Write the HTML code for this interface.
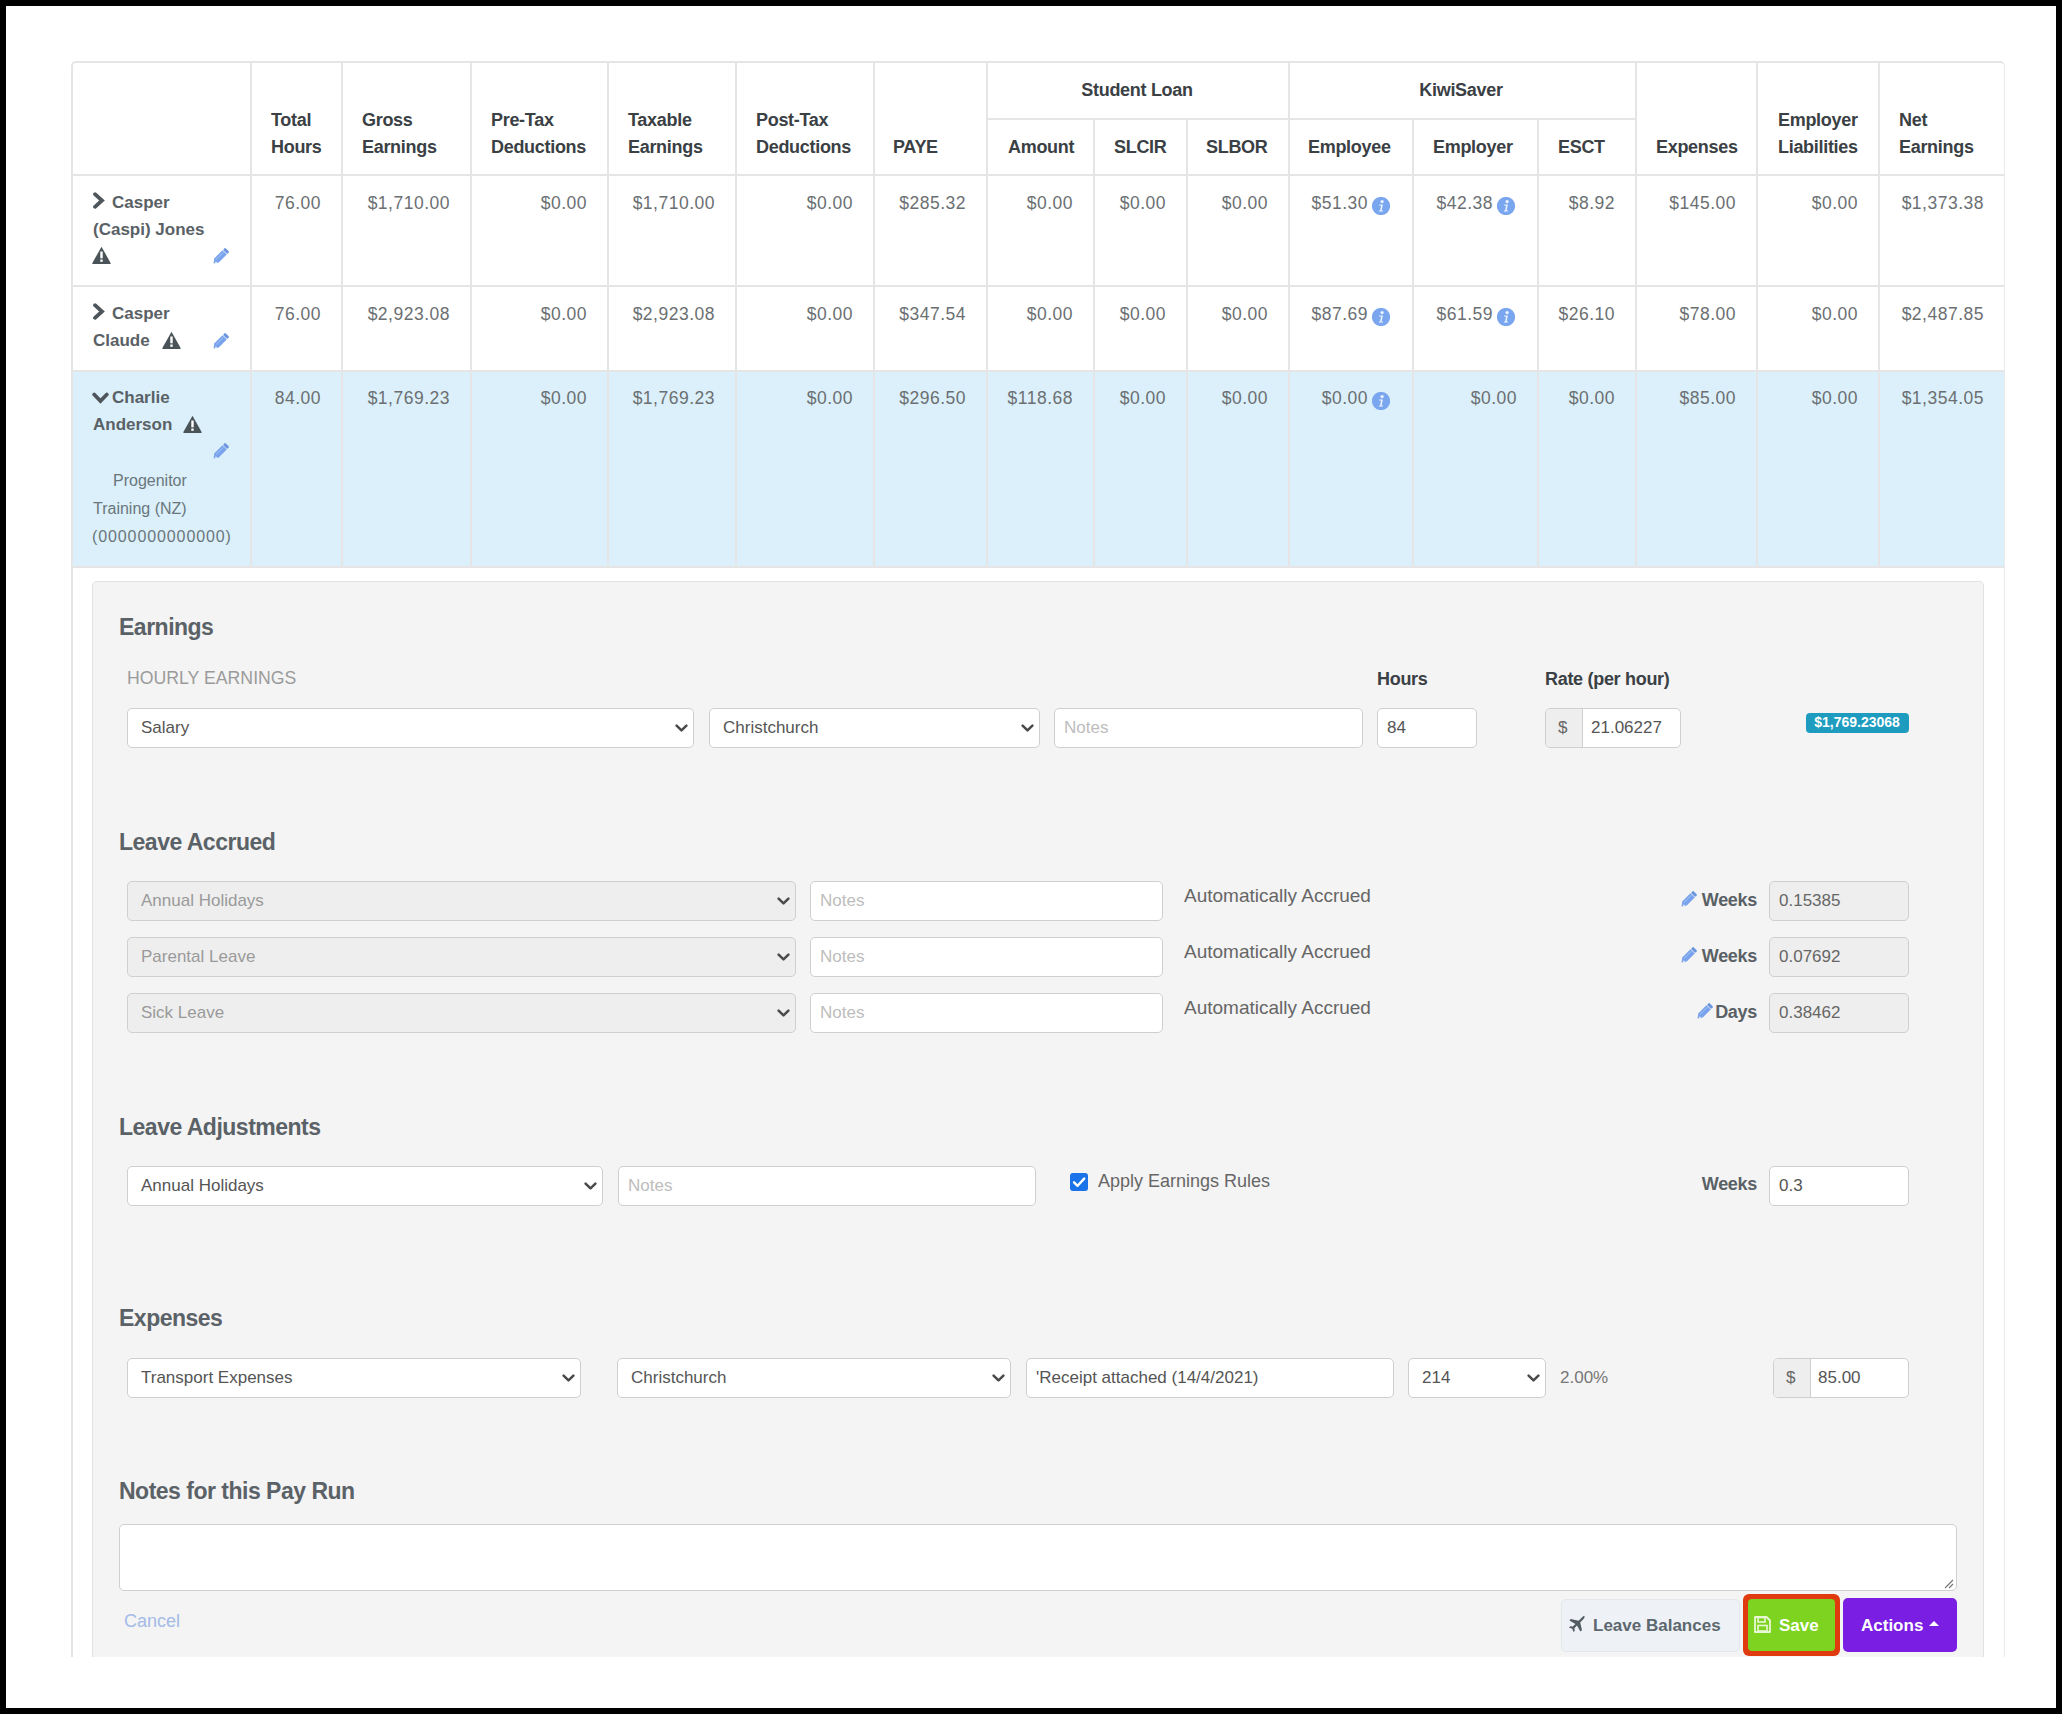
<!DOCTYPE html>
<html><head><meta charset="utf-8"><style>
html,body{margin:0;padding:0;}
body{width:2062px;height:1714px;background:#000;position:relative;overflow:hidden;font-family:'Liberation Sans', sans-serif;}
.t{position:absolute;white-space:nowrap;}
</style></head><body>

<div style="position:absolute;left:6px;top:6px;width:2050px;height:1702px;background:#fff;"></div>
<div style="position:absolute;left:72px;top:371px;width:1932px;height:196px;background:#dbf0fa;"></div>
<div style="position:absolute;left:71px;top:61px;width:1931px;height:1620px;border:2px solid #e5e5e5;border-right:1px solid #ebebeb;border-bottom:none;border-radius:5px 5px 0 0;"></div>
<div style="position:absolute;left:6px;top:1657px;width:2050px;height:51px;background:#fff;"></div>
<div style="position:absolute;left:250px;top:61px;width:2px;height:506px;background:#e5e5e5;"></div>
<div style="position:absolute;left:341px;top:61px;width:2px;height:506px;background:#e5e5e5;"></div>
<div style="position:absolute;left:470px;top:61px;width:2px;height:506px;background:#e5e5e5;"></div>
<div style="position:absolute;left:607px;top:61px;width:2px;height:506px;background:#e5e5e5;"></div>
<div style="position:absolute;left:735px;top:61px;width:2px;height:506px;background:#e5e5e5;"></div>
<div style="position:absolute;left:873px;top:61px;width:2px;height:506px;background:#e5e5e5;"></div>
<div style="position:absolute;left:986px;top:61px;width:2px;height:506px;background:#e5e5e5;"></div>
<div style="position:absolute;left:1288px;top:61px;width:2px;height:506px;background:#e5e5e5;"></div>
<div style="position:absolute;left:1635px;top:61px;width:2px;height:506px;background:#e5e5e5;"></div>
<div style="position:absolute;left:1756px;top:61px;width:2px;height:506px;background:#e5e5e5;"></div>
<div style="position:absolute;left:1878px;top:61px;width:2px;height:506px;background:#e5e5e5;"></div>
<div style="position:absolute;left:1093px;top:118px;width:2px;height:449px;background:#e5e5e5;"></div>
<div style="position:absolute;left:1186px;top:118px;width:2px;height:449px;background:#e5e5e5;"></div>
<div style="position:absolute;left:1412px;top:118px;width:2px;height:449px;background:#e5e5e5;"></div>
<div style="position:absolute;left:1537px;top:118px;width:2px;height:449px;background:#e5e5e5;"></div>
<div style="position:absolute;left:987px;top:118px;width:649px;height:2px;background:#e5e5e5;"></div>
<div style="position:absolute;left:72px;top:174px;width:1932px;height:2px;background:#e5e5e5;"></div>
<div style="position:absolute;left:72px;top:285px;width:1932px;height:2px;background:#e5e5e5;"></div>
<div style="position:absolute;left:72px;top:370px;width:1932px;height:2px;background:#e5e5e5;"></div>
<div style="position:absolute;left:72px;top:566px;width:1932px;height:2px;background:#e5e5e5;"></div>
<div class="t" style="left:271px;top:109.3px;font-size:18px;line-height:23px;font-weight:bold;color:#3a4044;letter-spacing:-0.3px;">Total</div>
<div class="t" style="left:271px;top:136.3px;font-size:18px;line-height:23px;font-weight:bold;color:#3a4044;letter-spacing:-0.3px;">Hours</div>
<div class="t" style="left:362px;top:109.3px;font-size:18px;line-height:23px;font-weight:bold;color:#3a4044;letter-spacing:-0.3px;">Gross</div>
<div class="t" style="left:362px;top:136.3px;font-size:18px;line-height:23px;font-weight:bold;color:#3a4044;letter-spacing:-0.3px;">Earnings</div>
<div class="t" style="left:491px;top:109.3px;font-size:18px;line-height:23px;font-weight:bold;color:#3a4044;letter-spacing:-0.3px;">Pre-Tax</div>
<div class="t" style="left:491px;top:136.3px;font-size:18px;line-height:23px;font-weight:bold;color:#3a4044;letter-spacing:-0.3px;">Deductions</div>
<div class="t" style="left:628px;top:109.3px;font-size:18px;line-height:23px;font-weight:bold;color:#3a4044;letter-spacing:-0.3px;">Taxable</div>
<div class="t" style="left:628px;top:136.3px;font-size:18px;line-height:23px;font-weight:bold;color:#3a4044;letter-spacing:-0.3px;">Earnings</div>
<div class="t" style="left:756px;top:109.3px;font-size:18px;line-height:23px;font-weight:bold;color:#3a4044;letter-spacing:-0.3px;">Post-Tax</div>
<div class="t" style="left:756px;top:136.3px;font-size:18px;line-height:23px;font-weight:bold;color:#3a4044;letter-spacing:-0.3px;">Deductions</div>
<div class="t" style="left:893px;top:136.3px;font-size:18px;line-height:23px;font-weight:bold;color:#3a4044;letter-spacing:-0.3px;">PAYE</div>
<div class="t" style="left:837px;width:600px;text-align:center;top:79.3px;font-size:18px;line-height:23px;font-weight:bold;color:#3a4044;letter-spacing:-0.3px;">Student Loan</div>
<div class="t" style="left:1008px;top:136.3px;font-size:18px;line-height:23px;font-weight:bold;color:#3a4044;letter-spacing:-0.3px;">Amount</div>
<div class="t" style="left:1114px;top:136.3px;font-size:18px;line-height:23px;font-weight:bold;color:#3a4044;letter-spacing:-0.3px;">SLCIR</div>
<div class="t" style="left:1206px;top:136.3px;font-size:18px;line-height:23px;font-weight:bold;color:#3a4044;letter-spacing:-0.3px;">SLBOR</div>
<div class="t" style="left:1161px;width:600px;text-align:center;top:79.3px;font-size:18px;line-height:23px;font-weight:bold;color:#3a4044;letter-spacing:-0.3px;">KiwiSaver</div>
<div class="t" style="left:1308px;top:136.3px;font-size:18px;line-height:23px;font-weight:bold;color:#3a4044;letter-spacing:-0.3px;">Employee</div>
<div class="t" style="left:1433px;top:136.3px;font-size:18px;line-height:23px;font-weight:bold;color:#3a4044;letter-spacing:-0.3px;">Employer</div>
<div class="t" style="left:1558px;top:136.3px;font-size:18px;line-height:23px;font-weight:bold;color:#3a4044;letter-spacing:-0.3px;">ESCT</div>
<div class="t" style="left:1656px;top:136.3px;font-size:18px;line-height:23px;font-weight:bold;color:#3a4044;letter-spacing:-0.3px;">Expenses</div>
<div class="t" style="left:1778px;top:109.3px;font-size:18px;line-height:23px;font-weight:bold;color:#3a4044;letter-spacing:-0.3px;">Employer</div>
<div class="t" style="left:1778px;top:136.3px;font-size:18px;line-height:23px;font-weight:bold;color:#3a4044;letter-spacing:-0.3px;">Liabilities</div>
<div class="t" style="left:1899px;top:109.3px;font-size:18px;line-height:23px;font-weight:bold;color:#3a4044;letter-spacing:-0.3px;">Net</div>
<div class="t" style="left:1899px;top:136.3px;font-size:18px;line-height:23px;font-weight:bold;color:#3a4044;letter-spacing:-0.3px;">Earnings</div>
<div class="t" style="right:1741px;top:192.4px;font-size:17.5px;line-height:23px;font-weight:normal;color:#6b6f72;letter-spacing:0.5px;">76.00</div>
<div class="t" style="right:1612px;top:192.4px;font-size:17.5px;line-height:23px;font-weight:normal;color:#6b6f72;letter-spacing:0.5px;">$1,710.00</div>
<div class="t" style="right:1475px;top:192.4px;font-size:17.5px;line-height:23px;font-weight:normal;color:#6b6f72;letter-spacing:0.5px;">$0.00</div>
<div class="t" style="right:1347px;top:192.4px;font-size:17.5px;line-height:23px;font-weight:normal;color:#6b6f72;letter-spacing:0.5px;">$1,710.00</div>
<div class="t" style="right:1209px;top:192.4px;font-size:17.5px;line-height:23px;font-weight:normal;color:#6b6f72;letter-spacing:0.5px;">$0.00</div>
<div class="t" style="right:1096px;top:192.4px;font-size:17.5px;line-height:23px;font-weight:normal;color:#6b6f72;letter-spacing:0.5px;">$285.32</div>
<div class="t" style="right:989px;top:192.4px;font-size:17.5px;line-height:23px;font-weight:normal;color:#6b6f72;letter-spacing:0.5px;">$0.00</div>
<div class="t" style="right:896px;top:192.4px;font-size:17.5px;line-height:23px;font-weight:normal;color:#6b6f72;letter-spacing:0.5px;">$0.00</div>
<div class="t" style="right:794px;top:192.4px;font-size:17.5px;line-height:23px;font-weight:normal;color:#6b6f72;letter-spacing:0.5px;">$0.00</div>
<svg style="position:absolute;left:1372px;top:197px" width="18" height="18" viewBox="0 0 18 18"><circle cx="9" cy="9" r="9.1" fill="#79a6ee"/><circle cx="10.1" cy="4.6" r="1.6" fill="#eef5ff"/><path d="M7.2 7.6 H10.9 L9.6 13.6 H11 L10.8 14.6 H6.8 L7 13.6 H8.1 L9.1 8.6 H7 Z" fill="#eef5ff"/></svg>
<div class="t" style="right:694px;top:192.4px;font-size:17.5px;line-height:23px;font-weight:normal;color:#6b6f72;letter-spacing:0.5px;">$51.30</div>
<svg style="position:absolute;left:1497px;top:197px" width="18" height="18" viewBox="0 0 18 18"><circle cx="9" cy="9" r="9.1" fill="#79a6ee"/><circle cx="10.1" cy="4.6" r="1.6" fill="#eef5ff"/><path d="M7.2 7.6 H10.9 L9.6 13.6 H11 L10.8 14.6 H6.8 L7 13.6 H8.1 L9.1 8.6 H7 Z" fill="#eef5ff"/></svg>
<div class="t" style="right:569px;top:192.4px;font-size:17.5px;line-height:23px;font-weight:normal;color:#6b6f72;letter-spacing:0.5px;">$42.38</div>
<div class="t" style="right:447px;top:192.4px;font-size:17.5px;line-height:23px;font-weight:normal;color:#6b6f72;letter-spacing:0.5px;">$8.92</div>
<div class="t" style="right:326px;top:192.4px;font-size:17.5px;line-height:23px;font-weight:normal;color:#6b6f72;letter-spacing:0.5px;">$145.00</div>
<div class="t" style="right:204px;top:192.4px;font-size:17.5px;line-height:23px;font-weight:normal;color:#6b6f72;letter-spacing:0.5px;">$0.00</div>
<div class="t" style="right:78px;top:192.4px;font-size:17.5px;line-height:23px;font-weight:normal;color:#6b6f72;letter-spacing:0.5px;">$1,373.38</div>
<div class="t" style="right:1741px;top:303.4px;font-size:17.5px;line-height:23px;font-weight:normal;color:#6b6f72;letter-spacing:0.5px;">76.00</div>
<div class="t" style="right:1612px;top:303.4px;font-size:17.5px;line-height:23px;font-weight:normal;color:#6b6f72;letter-spacing:0.5px;">$2,923.08</div>
<div class="t" style="right:1475px;top:303.4px;font-size:17.5px;line-height:23px;font-weight:normal;color:#6b6f72;letter-spacing:0.5px;">$0.00</div>
<div class="t" style="right:1347px;top:303.4px;font-size:17.5px;line-height:23px;font-weight:normal;color:#6b6f72;letter-spacing:0.5px;">$2,923.08</div>
<div class="t" style="right:1209px;top:303.4px;font-size:17.5px;line-height:23px;font-weight:normal;color:#6b6f72;letter-spacing:0.5px;">$0.00</div>
<div class="t" style="right:1096px;top:303.4px;font-size:17.5px;line-height:23px;font-weight:normal;color:#6b6f72;letter-spacing:0.5px;">$347.54</div>
<div class="t" style="right:989px;top:303.4px;font-size:17.5px;line-height:23px;font-weight:normal;color:#6b6f72;letter-spacing:0.5px;">$0.00</div>
<div class="t" style="right:896px;top:303.4px;font-size:17.5px;line-height:23px;font-weight:normal;color:#6b6f72;letter-spacing:0.5px;">$0.00</div>
<div class="t" style="right:794px;top:303.4px;font-size:17.5px;line-height:23px;font-weight:normal;color:#6b6f72;letter-spacing:0.5px;">$0.00</div>
<svg style="position:absolute;left:1372px;top:308px" width="18" height="18" viewBox="0 0 18 18"><circle cx="9" cy="9" r="9.1" fill="#79a6ee"/><circle cx="10.1" cy="4.6" r="1.6" fill="#eef5ff"/><path d="M7.2 7.6 H10.9 L9.6 13.6 H11 L10.8 14.6 H6.8 L7 13.6 H8.1 L9.1 8.6 H7 Z" fill="#eef5ff"/></svg>
<div class="t" style="right:694px;top:303.4px;font-size:17.5px;line-height:23px;font-weight:normal;color:#6b6f72;letter-spacing:0.5px;">$87.69</div>
<svg style="position:absolute;left:1497px;top:308px" width="18" height="18" viewBox="0 0 18 18"><circle cx="9" cy="9" r="9.1" fill="#79a6ee"/><circle cx="10.1" cy="4.6" r="1.6" fill="#eef5ff"/><path d="M7.2 7.6 H10.9 L9.6 13.6 H11 L10.8 14.6 H6.8 L7 13.6 H8.1 L9.1 8.6 H7 Z" fill="#eef5ff"/></svg>
<div class="t" style="right:569px;top:303.4px;font-size:17.5px;line-height:23px;font-weight:normal;color:#6b6f72;letter-spacing:0.5px;">$61.59</div>
<div class="t" style="right:447px;top:303.4px;font-size:17.5px;line-height:23px;font-weight:normal;color:#6b6f72;letter-spacing:0.5px;">$26.10</div>
<div class="t" style="right:326px;top:303.4px;font-size:17.5px;line-height:23px;font-weight:normal;color:#6b6f72;letter-spacing:0.5px;">$78.00</div>
<div class="t" style="right:204px;top:303.4px;font-size:17.5px;line-height:23px;font-weight:normal;color:#6b6f72;letter-spacing:0.5px;">$0.00</div>
<div class="t" style="right:78px;top:303.4px;font-size:17.5px;line-height:23px;font-weight:normal;color:#6b6f72;letter-spacing:0.5px;">$2,487.85</div>
<div class="t" style="right:1741px;top:387.4px;font-size:17.5px;line-height:23px;font-weight:normal;color:#6b6f72;letter-spacing:0.5px;">84.00</div>
<div class="t" style="right:1612px;top:387.4px;font-size:17.5px;line-height:23px;font-weight:normal;color:#6b6f72;letter-spacing:0.5px;">$1,769.23</div>
<div class="t" style="right:1475px;top:387.4px;font-size:17.5px;line-height:23px;font-weight:normal;color:#6b6f72;letter-spacing:0.5px;">$0.00</div>
<div class="t" style="right:1347px;top:387.4px;font-size:17.5px;line-height:23px;font-weight:normal;color:#6b6f72;letter-spacing:0.5px;">$1,769.23</div>
<div class="t" style="right:1209px;top:387.4px;font-size:17.5px;line-height:23px;font-weight:normal;color:#6b6f72;letter-spacing:0.5px;">$0.00</div>
<div class="t" style="right:1096px;top:387.4px;font-size:17.5px;line-height:23px;font-weight:normal;color:#6b6f72;letter-spacing:0.5px;">$296.50</div>
<div class="t" style="right:989px;top:387.4px;font-size:17.5px;line-height:23px;font-weight:normal;color:#6b6f72;letter-spacing:0.5px;">$118.68</div>
<div class="t" style="right:896px;top:387.4px;font-size:17.5px;line-height:23px;font-weight:normal;color:#6b6f72;letter-spacing:0.5px;">$0.00</div>
<div class="t" style="right:794px;top:387.4px;font-size:17.5px;line-height:23px;font-weight:normal;color:#6b6f72;letter-spacing:0.5px;">$0.00</div>
<svg style="position:absolute;left:1372px;top:392px" width="18" height="18" viewBox="0 0 18 18"><circle cx="9" cy="9" r="9.1" fill="#79a6ee"/><circle cx="10.1" cy="4.6" r="1.6" fill="#eef5ff"/><path d="M7.2 7.6 H10.9 L9.6 13.6 H11 L10.8 14.6 H6.8 L7 13.6 H8.1 L9.1 8.6 H7 Z" fill="#eef5ff"/></svg>
<div class="t" style="right:694px;top:387.4px;font-size:17.5px;line-height:23px;font-weight:normal;color:#6b6f72;letter-spacing:0.5px;">$0.00</div>
<div class="t" style="right:545px;top:387.4px;font-size:17.5px;line-height:23px;font-weight:normal;color:#6b6f72;letter-spacing:0.5px;">$0.00</div>
<div class="t" style="right:447px;top:387.4px;font-size:17.5px;line-height:23px;font-weight:normal;color:#6b6f72;letter-spacing:0.5px;">$0.00</div>
<div class="t" style="right:326px;top:387.4px;font-size:17.5px;line-height:23px;font-weight:normal;color:#6b6f72;letter-spacing:0.5px;">$85.00</div>
<div class="t" style="right:204px;top:387.4px;font-size:17.5px;line-height:23px;font-weight:normal;color:#6b6f72;letter-spacing:0.5px;">$0.00</div>
<div class="t" style="right:78px;top:387.4px;font-size:17.5px;line-height:23px;font-weight:normal;color:#6b6f72;letter-spacing:0.5px;">$1,354.05</div>
<svg style="position:absolute;left:92px;top:192px" width="13" height="17" viewBox="0 0 13 17"><path d="M3 2.2 L10 8.5 L3 14.8" fill="none" stroke="#4e565b" stroke-width="3.8" stroke-linecap="round" stroke-linejoin="miter"/></svg>
<div class="t" style="left:112px;top:192.1px;font-size:17px;line-height:22px;font-weight:bold;color:#5a6166;">Casper</div>
<div class="t" style="left:93px;top:219.1px;font-size:17px;line-height:22px;font-weight:bold;color:#5a6166;">(Caspi) Jones</div>
<svg style="position:absolute;left:92px;top:246px" width="19" height="18" viewBox="0 0 19 18"><path d="M9.5 0.8 L18.6 17 Q19 18 18 18 H1 Q0 18 0.4 17 Z" fill="#4a5357"/><rect x="8.3" y="5.5" width="2.4" height="6.8" fill="#fff"/><rect x="8.3" y="13.5" width="2.4" height="2.3" fill="#fff"/></svg>
<svg style="position:absolute;left:212px;top:248px" width="17" height="17" viewBox="0 0 17 17"><g transform="translate(1.4,15.6) rotate(-45) scale(0.9)"><path d="M0.2 0 L5 -3.4 H17.6 V3.4 H5 Z" fill="#79a3ec"/><rect x="18.3" y="-3.4" width="3.4" height="6.8" rx="1.4" fill="#6f97e0"/><path d="M5.4 -1.1 H17" stroke="#a9c6f7" stroke-width="1"/><circle cx="3" cy="1" r="0.9" fill="#e4eefc"/></g></svg>
<svg style="position:absolute;left:92px;top:303px" width="13" height="17" viewBox="0 0 13 17"><path d="M3 2.2 L10 8.5 L3 14.8" fill="none" stroke="#4e565b" stroke-width="3.8" stroke-linecap="round" stroke-linejoin="miter"/></svg>
<div class="t" style="left:112px;top:303.1px;font-size:17px;line-height:22px;font-weight:bold;color:#5a6166;">Casper</div>
<div class="t" style="left:93px;top:330.1px;font-size:17px;line-height:22px;font-weight:bold;color:#5a6166;">Claude</div>
<svg style="position:absolute;left:162px;top:331px" width="19" height="18" viewBox="0 0 19 18"><path d="M9.5 0.8 L18.6 17 Q19 18 18 18 H1 Q0 18 0.4 17 Z" fill="#4a5357"/><rect x="8.3" y="5.5" width="2.4" height="6.8" fill="#fff"/><rect x="8.3" y="13.5" width="2.4" height="2.3" fill="#fff"/></svg>
<svg style="position:absolute;left:212px;top:333px" width="17" height="17" viewBox="0 0 17 17"><g transform="translate(1.4,15.6) rotate(-45) scale(0.9)"><path d="M0.2 0 L5 -3.4 H17.6 V3.4 H5 Z" fill="#79a3ec"/><rect x="18.3" y="-3.4" width="3.4" height="6.8" rx="1.4" fill="#6f97e0"/><path d="M5.4 -1.1 H17" stroke="#a9c6f7" stroke-width="1"/><circle cx="3" cy="1" r="0.9" fill="#e4eefc"/></g></svg>
<svg style="position:absolute;left:92px;top:392px" width="17" height="13" viewBox="0 0 17 13"><path d="M2.2 2.5 L8.5 9 L14.8 2.5" fill="none" stroke="#4e565b" stroke-width="3.8" stroke-linecap="round" stroke-linejoin="miter"/></svg>
<div class="t" style="left:112px;top:387.1px;font-size:17px;line-height:22px;font-weight:bold;color:#5a6166;">Charlie</div>
<div class="t" style="left:93px;top:414.1px;font-size:17px;line-height:22px;font-weight:bold;color:#5a6166;">Anderson</div>
<svg style="position:absolute;left:183px;top:415px" width="19" height="18" viewBox="0 0 19 18"><path d="M9.5 0.8 L18.6 17 Q19 18 18 18 H1 Q0 18 0.4 17 Z" fill="#4a5357"/><rect x="8.3" y="5.5" width="2.4" height="6.8" fill="#fff"/><rect x="8.3" y="13.5" width="2.4" height="2.3" fill="#fff"/></svg>
<svg style="position:absolute;left:212px;top:443px" width="17" height="17" viewBox="0 0 17 17"><g transform="translate(1.4,15.6) rotate(-45) scale(0.9)"><path d="M0.2 0 L5 -3.4 H17.6 V3.4 H5 Z" fill="#79a3ec"/><rect x="18.3" y="-3.4" width="3.4" height="6.8" rx="1.4" fill="#6f97e0"/><path d="M5.4 -1.1 H17" stroke="#a9c6f7" stroke-width="1"/><circle cx="3" cy="1" r="0.9" fill="#e4eefc"/></g></svg>
<div class="t" style="left:113px;top:470.0px;font-size:16px;line-height:21px;font-weight:normal;color:#6a767c;">Progenitor</div>
<div class="t" style="left:93px;top:498.0px;font-size:16px;line-height:21px;font-weight:normal;color:#6a767c;">Training (NZ)</div>
<div class="t" style="left:92px;top:526.0px;font-size:16px;line-height:21px;font-weight:normal;color:#6a767c;letter-spacing:0.9px;">(0000000000000)</div>
<div style="position:absolute;left:92px;top:581px;width:1890px;height:1076px;background:#f4f4f4;border:1px solid #e2e2e2;border-bottom:none;border-radius:5px 5px 0 0;"></div>
<div style="position:absolute;left:6px;top:1657px;width:2050px;height:51px;background:#fff;"></div>
<div class="t" style="left:119px;top:612.0px;font-size:23px;line-height:30px;font-weight:bold;color:#5b6267;letter-spacing:-0.5px;">Earnings</div>
<div class="t" style="left:127px;top:667.4px;font-size:17.7px;line-height:23px;font-weight:normal;color:#9b9b9b;">HOURLY EARNINGS</div>
<div class="t" style="left:1377px;top:668.3px;font-size:18px;line-height:23px;font-weight:bold;color:#3a4044;letter-spacing:-0.3px;">Hours</div>
<div class="t" style="left:1545px;top:668.3px;font-size:18px;line-height:23px;font-weight:bold;color:#3a4044;letter-spacing:-0.3px;">Rate (per hour)</div>
<div style="position:absolute;left:127px;top:708px;width:565px;height:38px;background:#fff;border:1px solid #cfcfcf;border-radius:5px;"></div>
<div class="t" style="left:141px;top:717.1px;font-size:17px;line-height:22px;font-weight:normal;color:#555;">Salary</div>
<svg style="position:absolute;left:675px;top:724px" width="13" height="9" viewBox="0 0 13 9"><path d="M1.6 1.6 L6.5 6.4 L11.4 1.6" fill="none" stroke="#4a4a4a" stroke-width="2.5" stroke-linecap="round" stroke-linejoin="round"/></svg>
<div style="position:absolute;left:709px;top:708px;width:329px;height:38px;background:#fff;border:1px solid #cfcfcf;border-radius:5px;"></div>
<div class="t" style="left:723px;top:717.1px;font-size:17px;line-height:22px;font-weight:normal;color:#555;">Christchurch</div>
<svg style="position:absolute;left:1021px;top:724px" width="13" height="9" viewBox="0 0 13 9"><path d="M1.6 1.6 L6.5 6.4 L11.4 1.6" fill="none" stroke="#4a4a4a" stroke-width="2.5" stroke-linecap="round" stroke-linejoin="round"/></svg>
<div style="position:absolute;left:1054px;top:708px;width:307px;height:38px;background:#fff;border:1px solid #cfcfcf;border-radius:5px;"></div>
<div class="t" style="left:1064px;top:717.1px;font-size:17px;line-height:22px;font-weight:normal;color:#bdbdbd;">Notes</div>
<div style="position:absolute;left:1377px;top:708px;width:98px;height:38px;background:#fff;border:1px solid #cfcfcf;border-radius:5px;"></div>
<div class="t" style="left:1387px;top:717.1px;font-size:17px;line-height:22px;font-weight:normal;color:#555;">84</div>
<div style="position:absolute;left:1545px;top:708px;width:134px;height:38px;background:#fff;border:1px solid #cfcfcf;border-radius:5px;overflow:hidden;"><div style="position:absolute;left:0;top:0;width:36px;height:38px;background:#eee;border-right:1px solid #cfcfcf;"></div></div>
<div class="t" style="left:1558px;top:717.1px;font-size:17px;line-height:22px;font-weight:normal;color:#666;">$</div>
<div class="t" style="left:1591px;top:717.1px;font-size:17px;line-height:22px;font-weight:normal;color:#555;">21.06227</div>
<div style="position:absolute;left:1806px;top:713px;width:103px;height:20px;background:#1d9cc0;border-radius:4px;"></div>
<div class="t" style="left:1557px;width:600px;text-align:center;top:713.1px;font-size:14px;line-height:18px;font-weight:bold;color:#fff;">$1,769.23068</div>
<div class="t" style="left:119px;top:827.0px;font-size:23px;line-height:30px;font-weight:bold;color:#5b6267;letter-spacing:-0.5px;">Leave Accrued</div>
<div style="position:absolute;left:127px;top:881px;width:667px;height:38px;background:#eeeeee;border:1px solid #cfcfcf;border-radius:5px;"></div>
<div class="t" style="left:141px;top:890.1px;font-size:17px;line-height:22px;font-weight:normal;color:#9a9a9a;">Annual Holidays</div>
<svg style="position:absolute;left:777px;top:897px" width="13" height="9" viewBox="0 0 13 9"><path d="M1.6 1.6 L6.5 6.4 L11.4 1.6" fill="none" stroke="#4a4a4a" stroke-width="2.5" stroke-linecap="round" stroke-linejoin="round"/></svg>
<div style="position:absolute;left:810px;top:881px;width:351px;height:38px;background:#fff;border:1px solid #cfcfcf;border-radius:5px;"></div>
<div class="t" style="left:820px;top:890.1px;font-size:17px;line-height:22px;font-weight:normal;color:#bdbdbd;">Notes</div>
<div class="t" style="left:1184px;top:882.9px;font-size:19px;line-height:25px;font-weight:normal;color:#666;">Automatically Accrued</div>
<div class="t" style="right:305px;top:889.3px;font-size:18px;line-height:23px;font-weight:bold;color:#5a6166;letter-spacing:-0.3px;">Weeks</div>
<svg style="position:absolute;left:1680px;top:891px" width="17" height="17" viewBox="0 0 17 17"><g transform="translate(1.4,15.6) rotate(-45) scale(0.9)"><path d="M0.2 0 L5 -3.4 H17.6 V3.4 H5 Z" fill="#79a3ec"/><rect x="18.3" y="-3.4" width="3.4" height="6.8" rx="1.4" fill="#6f97e0"/><path d="M5.4 -1.1 H17" stroke="#a9c6f7" stroke-width="1"/><circle cx="3" cy="1" r="0.9" fill="#e4eefc"/></g></svg>
<div style="position:absolute;left:1769px;top:881px;width:138px;height:38px;background:#eeeeee;border:1px solid #cfcfcf;border-radius:5px;"></div>
<div class="t" style="left:1779px;top:890.1px;font-size:17px;line-height:22px;font-weight:normal;color:#666;">0.15385</div>
<div style="position:absolute;left:127px;top:937px;width:667px;height:38px;background:#eeeeee;border:1px solid #cfcfcf;border-radius:5px;"></div>
<div class="t" style="left:141px;top:946.1px;font-size:17px;line-height:22px;font-weight:normal;color:#9a9a9a;">Parental Leave</div>
<svg style="position:absolute;left:777px;top:953px" width="13" height="9" viewBox="0 0 13 9"><path d="M1.6 1.6 L6.5 6.4 L11.4 1.6" fill="none" stroke="#4a4a4a" stroke-width="2.5" stroke-linecap="round" stroke-linejoin="round"/></svg>
<div style="position:absolute;left:810px;top:937px;width:351px;height:38px;background:#fff;border:1px solid #cfcfcf;border-radius:5px;"></div>
<div class="t" style="left:820px;top:946.1px;font-size:17px;line-height:22px;font-weight:normal;color:#bdbdbd;">Notes</div>
<div class="t" style="left:1184px;top:938.9px;font-size:19px;line-height:25px;font-weight:normal;color:#666;">Automatically Accrued</div>
<div class="t" style="right:305px;top:945.3px;font-size:18px;line-height:23px;font-weight:bold;color:#5a6166;letter-spacing:-0.3px;">Weeks</div>
<svg style="position:absolute;left:1680px;top:947px" width="17" height="17" viewBox="0 0 17 17"><g transform="translate(1.4,15.6) rotate(-45) scale(0.9)"><path d="M0.2 0 L5 -3.4 H17.6 V3.4 H5 Z" fill="#79a3ec"/><rect x="18.3" y="-3.4" width="3.4" height="6.8" rx="1.4" fill="#6f97e0"/><path d="M5.4 -1.1 H17" stroke="#a9c6f7" stroke-width="1"/><circle cx="3" cy="1" r="0.9" fill="#e4eefc"/></g></svg>
<div style="position:absolute;left:1769px;top:937px;width:138px;height:38px;background:#eeeeee;border:1px solid #cfcfcf;border-radius:5px;"></div>
<div class="t" style="left:1779px;top:946.1px;font-size:17px;line-height:22px;font-weight:normal;color:#666;">0.07692</div>
<div style="position:absolute;left:127px;top:993px;width:667px;height:38px;background:#eeeeee;border:1px solid #cfcfcf;border-radius:5px;"></div>
<div class="t" style="left:141px;top:1002.1px;font-size:17px;line-height:22px;font-weight:normal;color:#9a9a9a;">Sick Leave</div>
<svg style="position:absolute;left:777px;top:1009px" width="13" height="9" viewBox="0 0 13 9"><path d="M1.6 1.6 L6.5 6.4 L11.4 1.6" fill="none" stroke="#4a4a4a" stroke-width="2.5" stroke-linecap="round" stroke-linejoin="round"/></svg>
<div style="position:absolute;left:810px;top:993px;width:351px;height:38px;background:#fff;border:1px solid #cfcfcf;border-radius:5px;"></div>
<div class="t" style="left:820px;top:1002.1px;font-size:17px;line-height:22px;font-weight:normal;color:#bdbdbd;">Notes</div>
<div class="t" style="left:1184px;top:994.9px;font-size:19px;line-height:25px;font-weight:normal;color:#666;">Automatically Accrued</div>
<div class="t" style="right:305px;top:1001.3px;font-size:18px;line-height:23px;font-weight:bold;color:#5a6166;letter-spacing:-0.3px;">Days</div>
<svg style="position:absolute;left:1696px;top:1003px" width="17" height="17" viewBox="0 0 17 17"><g transform="translate(1.4,15.6) rotate(-45) scale(0.9)"><path d="M0.2 0 L5 -3.4 H17.6 V3.4 H5 Z" fill="#79a3ec"/><rect x="18.3" y="-3.4" width="3.4" height="6.8" rx="1.4" fill="#6f97e0"/><path d="M5.4 -1.1 H17" stroke="#a9c6f7" stroke-width="1"/><circle cx="3" cy="1" r="0.9" fill="#e4eefc"/></g></svg>
<div style="position:absolute;left:1769px;top:993px;width:138px;height:38px;background:#eeeeee;border:1px solid #cfcfcf;border-radius:5px;"></div>
<div class="t" style="left:1779px;top:1002.1px;font-size:17px;line-height:22px;font-weight:normal;color:#666;">0.38462</div>
<div class="t" style="left:119px;top:1112.0px;font-size:23px;line-height:30px;font-weight:bold;color:#5b6267;letter-spacing:-0.5px;">Leave Adjustments</div>
<div style="position:absolute;left:127px;top:1166px;width:474px;height:38px;background:#fff;border:1px solid #cfcfcf;border-radius:5px;"></div>
<div class="t" style="left:141px;top:1175.1px;font-size:17px;line-height:22px;font-weight:normal;color:#555;">Annual Holidays</div>
<svg style="position:absolute;left:584px;top:1182px" width="13" height="9" viewBox="0 0 13 9"><path d="M1.6 1.6 L6.5 6.4 L11.4 1.6" fill="none" stroke="#4a4a4a" stroke-width="2.5" stroke-linecap="round" stroke-linejoin="round"/></svg>
<div style="position:absolute;left:618px;top:1166px;width:416px;height:38px;background:#fff;border:1px solid #cfcfcf;border-radius:5px;"></div>
<div class="t" style="left:628px;top:1175.1px;font-size:17px;line-height:22px;font-weight:normal;color:#bdbdbd;">Notes</div>
<div style="position:absolute;left:1070px;top:1173px;width:18px;height:18px;background:#1a73e8;border-radius:3px;"></div>
<svg style="position:absolute;left:1070px;top:1173px" width="18" height="18" viewBox="0 0 18 18"><path d="M4 9.3 L7.6 12.8 L14.2 5.6" fill="none" stroke="#fff" stroke-width="2.4" stroke-linecap="round" stroke-linejoin="round"/></svg>
<div class="t" style="left:1098px;top:1170.3px;font-size:18px;line-height:23px;font-weight:normal;color:#666;">Apply Earnings Rules</div>
<div class="t" style="right:305px;top:1173.3px;font-size:18px;line-height:23px;font-weight:bold;color:#5a6166;letter-spacing:-0.3px;">Weeks</div>
<div style="position:absolute;left:1769px;top:1166px;width:138px;height:38px;background:#fff;border:1px solid #cfcfcf;border-radius:5px;"></div>
<div class="t" style="left:1779px;top:1175.1px;font-size:17px;line-height:22px;font-weight:normal;color:#555;">0.3</div>
<div class="t" style="left:119px;top:1303.0px;font-size:23px;line-height:30px;font-weight:bold;color:#5b6267;letter-spacing:-0.5px;">Expenses</div>
<div style="position:absolute;left:127px;top:1358px;width:452px;height:38px;background:#fff;border:1px solid #cfcfcf;border-radius:5px;"></div>
<div class="t" style="left:141px;top:1367.1px;font-size:17px;line-height:22px;font-weight:normal;color:#555;">Transport Expenses</div>
<svg style="position:absolute;left:562px;top:1374px" width="13" height="9" viewBox="0 0 13 9"><path d="M1.6 1.6 L6.5 6.4 L11.4 1.6" fill="none" stroke="#4a4a4a" stroke-width="2.5" stroke-linecap="round" stroke-linejoin="round"/></svg>
<div style="position:absolute;left:617px;top:1358px;width:392px;height:38px;background:#fff;border:1px solid #cfcfcf;border-radius:5px;"></div>
<div class="t" style="left:631px;top:1367.1px;font-size:17px;line-height:22px;font-weight:normal;color:#555;">Christchurch</div>
<svg style="position:absolute;left:992px;top:1374px" width="13" height="9" viewBox="0 0 13 9"><path d="M1.6 1.6 L6.5 6.4 L11.4 1.6" fill="none" stroke="#4a4a4a" stroke-width="2.5" stroke-linecap="round" stroke-linejoin="round"/></svg>
<div style="position:absolute;left:1026px;top:1358px;width:366px;height:38px;background:#fff;border:1px solid #cfcfcf;border-radius:5px;"></div>
<div class="t" style="left:1036px;top:1367.1px;font-size:17px;line-height:22px;font-weight:normal;color:#555;">'Receipt attached (14/4/2021)</div>
<div style="position:absolute;left:1408px;top:1358px;width:136px;height:38px;background:#fff;border:1px solid #cfcfcf;border-radius:5px;"></div>
<div class="t" style="left:1422px;top:1367.1px;font-size:17px;line-height:22px;font-weight:normal;color:#555;">214</div>
<svg style="position:absolute;left:1527px;top:1374px" width="13" height="9" viewBox="0 0 13 9"><path d="M1.6 1.6 L6.5 6.4 L11.4 1.6" fill="none" stroke="#4a4a4a" stroke-width="2.5" stroke-linecap="round" stroke-linejoin="round"/></svg>
<div class="t" style="left:1560px;top:1367.1px;font-size:17px;line-height:22px;font-weight:normal;color:#777;">2.00%</div>
<div style="position:absolute;left:1773px;top:1358px;width:134px;height:38px;background:#fff;border:1px solid #cfcfcf;border-radius:5px;overflow:hidden;"><div style="position:absolute;left:0;top:0;width:36px;height:38px;background:#eee;border-right:1px solid #cfcfcf;"></div></div>
<div class="t" style="left:1786px;top:1367.1px;font-size:17px;line-height:22px;font-weight:normal;color:#666;">$</div>
<div class="t" style="left:1818px;top:1367.1px;font-size:17px;line-height:22px;font-weight:normal;color:#555;">85.00</div>
<div class="t" style="left:119px;top:1476.0px;font-size:23px;line-height:30px;font-weight:bold;color:#5b6267;letter-spacing:-0.5px;">Notes for this Pay Run</div>
<div style="position:absolute;left:119px;top:1524px;width:1836px;height:65px;background:#fff;border:1px solid #cfcfcf;border-radius:5px;"></div>
<svg style="position:absolute;left:1943px;top:1578px" width="11" height="11" viewBox="0 0 11 11"><path d="M10 2 L2 10 M10 6 L6 10" stroke="#777" stroke-width="1.2"/></svg>
<div class="t" style="left:124px;top:1610.3px;font-size:18px;line-height:23px;font-weight:normal;color:#a3bbe6;">Cancel</div>
<div style="position:absolute;left:1561px;top:1599px;width:177px;height:51px;background:#eef2f6;border:1px solid #e3e7eb;border-radius:5px;"></div>
<svg style="position:absolute;left:1568px;top:1615px" width="17" height="17" viewBox="0 0 17 17"><path d="M16.2 0.8 C17.2 1.8 16 3.6 15 4.6 L12.2 7.4 L14 15.2 L12.4 16.6 L9 10.6 L6.4 13.2 L6.8 15.8 L5.6 17 L4.2 13.8 L1 12.4 L2.2 11.2 L4.8 11.6 L7.4 9 L1.4 5.6 L2.8 4 L10.6 5.8 L13.4 3 C14.4 2 16 0.6 16.2 0.8 Z" fill="#535c63"/></svg>
<div class="t" style="left:1593px;top:1615.1px;font-size:17px;line-height:22px;font-weight:bold;color:#5d676e;">Leave Balances</div>
<div style="position:absolute;left:1743px;top:1594px;width:97px;height:62px;background:#e03b0f;border-radius:6px;"></div>
<div style="position:absolute;left:1748px;top:1599px;width:87px;height:52px;background:#7dd31f;border-radius:4px;"></div>
<svg style="position:absolute;left:1754px;top:1616px" width="17" height="17" viewBox="0 0 17 17"><path d="M1 1 H12.5 L16 4.5 V16 H1 Z" fill="none" stroke="#e9f7d6" stroke-width="1.8" stroke-linejoin="round"/><rect x="4" y="1.5" width="7" height="4.5" fill="none" stroke="#e9f7d6" stroke-width="1.6"/><rect x="4" y="9.5" width="9" height="5.5" fill="none" stroke="#e9f7d6" stroke-width="1.6"/></svg>
<div class="t" style="left:1779px;top:1615.1px;font-size:17px;line-height:22px;font-weight:bold;color:#fff;">Save</div>
<div style="position:absolute;left:1843px;top:1598px;width:114px;height:54px;background:#7a1ee3;border-radius:5px;"></div>
<div class="t" style="left:1861px;top:1615.1px;font-size:17px;line-height:22px;font-weight:bold;color:#fff;">Actions</div>
<div style="position:absolute;left:1929px;top:1621px;width:0;height:0;border-left:5px solid transparent;border-right:5px solid transparent;border-bottom:5px solid #fff;"></div>
</body></html>
